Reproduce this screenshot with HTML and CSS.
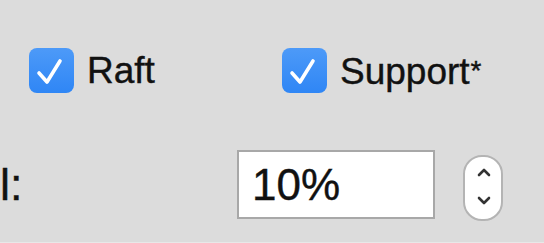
FILE: index.html
```html
<!DOCTYPE html>
<html>
<head>
<meta charset="utf-8">
<link rel="stylesheet" href="styles.css">
</head>
<body>
<div class="panel">
  <div class="row-checks">
    <label class="check check-first">
      <span class="box"><svg viewBox="0 0 45 45" width="45" height="45"><path d="M10 25 L18 34 L31 13" fill="none" stroke="#fff" stroke-width="3.6" stroke-linecap="round" stroke-linejoin="round"/></svg></span>
      <span class="check-text">Raft</span>
    </label>
    <label class="check">
      <span class="box"><svg viewBox="0 0 45 45" width="45" height="45"><path d="M10 25 L18 34 L31 13" fill="none" stroke="#fff" stroke-width="3.6" stroke-linecap="round" stroke-linejoin="round"/></svg></span>
      <span class="check-text">Support<span class="star">*</span></span>
    </label>
  </div>
  <div class="row-field">
    <span class="field-label">l:</span>
    <div class="field">10%</div>
    <div class="stepper">
      <svg viewBox="0 0 40 66" width="40" height="66">
        <path d="M16 20 L21 15 L26 20" fill="none" stroke="#333" stroke-width="2.6" stroke-linecap="round" stroke-linejoin="round"/>
        <path d="M16 43 L21 48 L26 43" fill="none" stroke="#333" stroke-width="2.6" stroke-linecap="round" stroke-linejoin="round"/>
      </svg>
    </div>
  </div>
</div>
</body>
</html>
```
FILE: styles.css
```css
html, body {
  margin: 0;
  padding: 0;
  background: #dcdcdc;
}
.panel {
  width: 544px;
  height: 242px;
  border-bottom: 1px solid #e8e8e8;
  background: #dcdcdc;
  font-family: "Liberation Sans", Arial, sans-serif;
  color: #111;
  -webkit-text-stroke: 0.4px #111;
  overflow: hidden;
}
.row-checks {
  display: flex;
  align-items: center;
  padding: 48px 0 0 29px;
  height: 45px;
}
.check {
  display: flex;
  align-items: center;
  gap: 13px;
}
.check-first {
  width: 253px;
}
.box {
  width: 45px;
  height: 45px;
  border-radius: 8px;
  background: linear-gradient(#4d9af8, #2f86f5);
  display: block;
}
.box svg {
  display: block;
}
.check-text {
  font-size: 37px;
  line-height: 45px;
}
.star {
  font-size: 28px;
  vertical-align: 4px;
  margin-left: 1px;
}
.row-field {
  display: flex;
  align-items: center;
  margin-top: 57px;
  height: 69px;
}
.field-label {
  font-size: 45px;
  width: 237px;
  line-height: 69px;
}
.field {
  box-sizing: border-box;
  width: 198px;
  height: 69px;
  border: 2px solid #a8a8a8;
  background: #fff;
  font-size: 44px;
  line-height: 65px;
  padding-left: 13px;
}
.stepper {
  box-sizing: border-box;
  margin-left: 28px;
  margin-top: 6px;
  width: 40px;
  height: 66px;
  border: 2px solid #b4b4b4;
  border-radius: 19px;
  background: #fff;
  overflow: hidden;
}
.stepper svg {
  display: block;
  margin: -2px;
}
```
